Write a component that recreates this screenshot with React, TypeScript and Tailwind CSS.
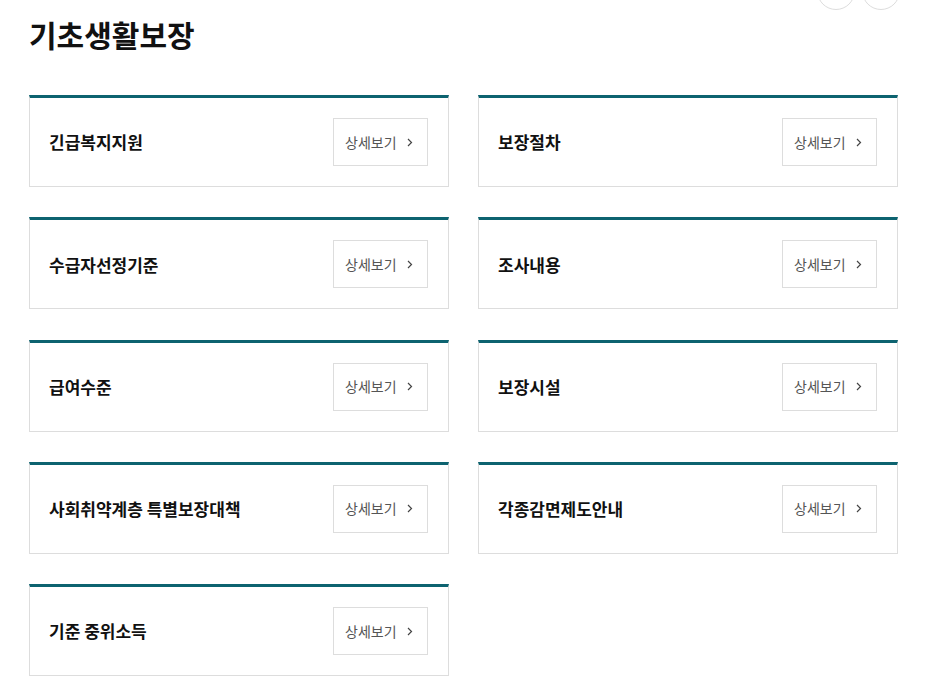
const items = [
  "긴급복지지원",
  "보장절차",
  "수급자선정기준",
  "조사내용",
  "급여수준",
  "보장시설",
  "사회취약계층 특별보장대책",
  "각종감면제도안내",
  "기준 중위소득",
];

function Chevron() {
  return (
    <svg width="6" height="9" viewBox="0 0 6 9" fill="none" className="ml-[10px]">
      <path d="M1 1 4.5 4.5 1 8" stroke="#444" strokeWidth="1.2" />
    </svg>
  );
}

function Card({ title }: { title: string }) {
  return (
    <div className="flex items-center justify-between border border-[#dddddd] border-t-[3px] border-t-[#0d6370] bg-white pl-[19px] pr-[20px] py-[20px]">
      <span className="text-[17px] font-bold text-[#111]">{title}</span>
      <button className="flex h-[48px] w-[95px] items-center border border-[#dddddd] bg-white pl-[11px] text-[14px] text-[#555]">
        상세보기
        <Chevron />
      </button>
    </div>
  );
}

export default function App() {
  return (
    <div
      className="min-h-[685px] w-[930px] overflow-hidden bg-white pl-[29px] pr-[32px]"
      style={{ fontFamily: '"Noto Sans CJK KR", "Noto Sans", sans-serif' }}
    >
      <div className="flex items-start justify-between">
        <h2 className="mt-[14px] text-[30px] font-bold leading-[40px] text-[#111]">
          기초생활보장
        </h2>
        <div className="-mt-[28px] mr-[-2px] flex gap-[7px]">
          <span className="block h-[38px] w-[38px] rounded-full border border-[#dddddd]" />
          <span className="block h-[38px] w-[38px] rounded-full border border-[#dddddd]" />
        </div>
      </div>
      <div className="mt-[41px] grid grid-cols-2 gap-x-[29px] gap-y-[30.3px] pb-[20px]">
        {items.map((t) => (
          <Card key={t} title={t} />
        ))}
      </div>
    </div>
  );
}
